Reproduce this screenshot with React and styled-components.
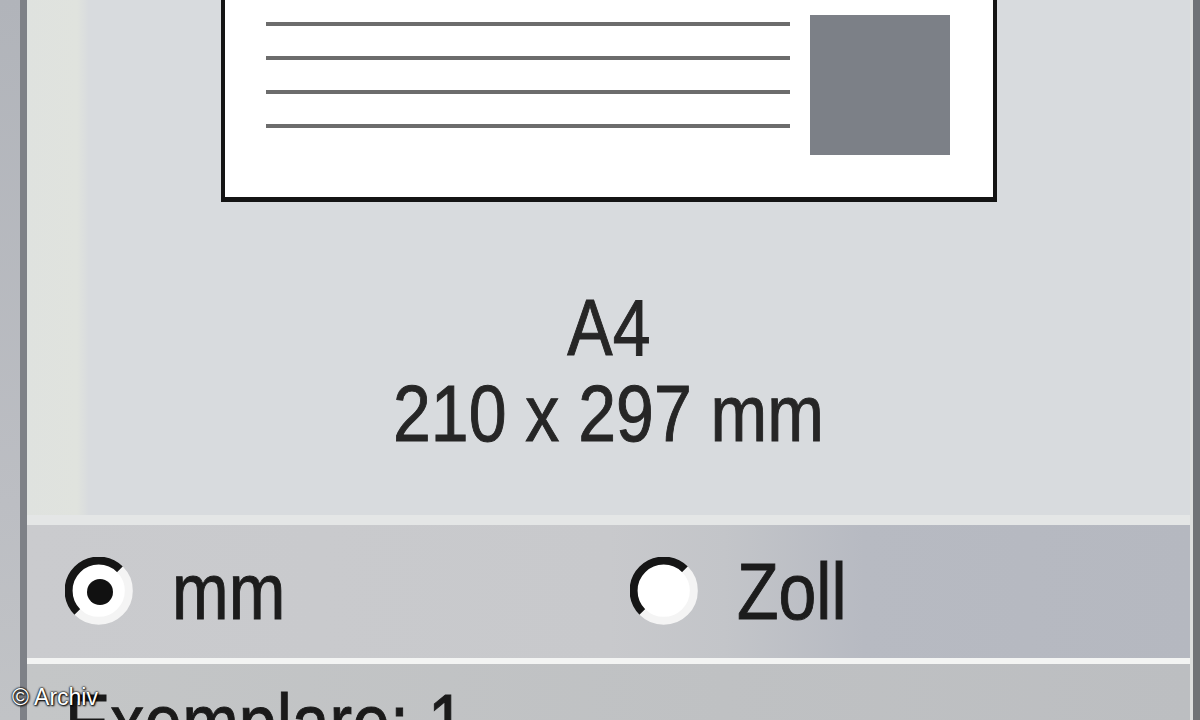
import React from "react"
import styled, { createGlobalStyle } from "styled-components"

const GlobalStyle = createGlobalStyle`
  html, body {
    margin: 0;
    padding: 0;
    width: 1200px;
    height: 720px;
    overflow: hidden;
    background: #d8dbde;
  }
  body {
    font-family: "Liberation Sans", Arial, sans-serif;
  }
`

const Frame = styled.div`
  position: relative;
  display: flex;
  width: 1200px;
  height: 720px;
  overflow: hidden;
`
const OuterStrip = styled.div`
  width: 20px;
  background: linear-gradient(180deg, #b1b4ba 0%, #bcbec3 70%, #c1c3c6 100%);
`
const Rule = styled.div`
  width: ${(p) => p.w}px;
  background: ${(p) => p.color};
`
const Main = styled.div`
  flex: 1;
  min-height: 0;
  display: flex;
  flex-direction: column;
  overflow: hidden;
`
const PreviewPanel = styled.div`
  flex-shrink: 0;
  height: 515px;
  display: flex;
  flex-direction: column;
  align-items: center;
  background: linear-gradient(
    90deg,
    #dfe2df 0,
    #e0e3de 50px,
    #d8dbde 62px,
    #d8dbde 100%
  );
`
const Paper = styled.div`
  display: flex;
  gap: 20px;
  box-sizing: border-box;
  width: 776px;
  height: 202px;
  padding: 0 42px 0 41px;
  background: #fff;
  border: 4px solid #141414;
  border-top: none;
  border-bottom-width: 5px;
`
const Lines = styled.div`
  width: 524px;
  display: flex;
  flex-direction: column;
  gap: 30px;
  padding-top: 22px;
`
const Line = styled.div`
  height: 4px;
  background: #6c6c6c;
`
const Thumb = styled.div`
  width: 140px;
  height: 140px;
  margin-top: 15px;
  background: #7c8087;
`
const Caption = styled.div`
  margin-top: 83px;
  display: flex;
  flex-direction: column;
  align-items: center;
  color: #262626;
`
const Big = styled.span`
  display: inline-block;
  font-size: 80px;
  line-height: 86px;
  transform: scaleX(0.85);
  white-space: pre;
  -webkit-text-stroke: 1px currentColor;
`
const Highlight = styled.div`
  flex-shrink: 0;
  height: 10px;
  background: #e4e6e6;
`
const RadioRow = styled.div`
  flex-shrink: 0;
  height: 133px;
  display: flex;
  align-items: center;
  padding-left: 38px;
  background: linear-gradient(
    90deg,
    #cacbce 0%,
    #c8c9cc 50%,
    #c3c5c9 60%,
    #b7bac2 72%,
    #b5b8c0 100%
  );
`
const Option = styled.label`
  display: flex;
  align-items: center;
  width: ${(p) => p.w || 565}px;
  gap: 37px;
  color: #1c1c1c;
`
const Label = styled.span`
  display: inline-block;
  font-size: 80px;
  line-height: 80px;
  transform: scaleX(0.85);
  transform-origin: left center;
  white-space: pre;
  -webkit-text-stroke: 1px currentColor;
`
const Separator = styled.div`
  flex-shrink: 0;
  height: 6px;
  background: #f3f4f3;
`
const CopiesPanel = styled.div`
  flex-shrink: 0;
  height: 120px;
  padding: 19px 0 0 38px;
  background: linear-gradient(90deg, #c4c6c7 0%, #bfc1c3 60%, #bcbec1 100%);
  color: #1a1a1a;
`
const Credit = styled.div`
  position: absolute;
  left: 12px;
  top: 684px;
  font-family: "Liberation Sans", Arial, sans-serif;
  font-size: 23px;
  line-height: 26px;
  color: #fff;
  text-shadow: 0 0 2px #000, 0 0 2px #000, 1px 1px 2px #000;
`

const Radio = ({ checked }) => (
  <svg width="70" height="70" viewBox="0 0 70 70">
    <circle cx="35" cy="35" r="29" fill="#fff" />
    <path
      d="M12.4 55 A29 29 0 0 1 55 12.4"
      fill="none"
      stroke="#151515"
      strokeWidth="8"
    />
    <path
      d="M55 12.4 A29 29 0 0 1 12.4 55"
      fill="none"
      stroke="#f4f4f4"
      strokeWidth="8"
    />
    {checked && <circle cx="35" cy="35" r="13" fill="#111" />}
  </svg>
)

const App = () => (
  <>
    <GlobalStyle />
    <Frame>
      <OuterStrip />
      <Rule w={7} color="#7e8187" />
      <Main>
        <PreviewPanel>
          <Paper>
            <Lines>
              <Line />
              <Line />
              <Line />
              <Line />
            </Lines>
            <Thumb />
          </Paper>
          <Caption>
            <Big>A4</Big>
            <Big>210 x 297 mm</Big>
          </Caption>
        </PreviewPanel>
        <Highlight />
        <RadioRow>
          <Option>
            <Radio checked />
            <Label>mm</Label>
          </Option>
          <Option w={300}>
            <Radio />
            <Label>Zoll</Label>
          </Option>
        </RadioRow>
        <Separator />
        <CopiesPanel>
          <Label>Exemplare: 1</Label>
        </CopiesPanel>
      </Main>
      <Rule w={3} color="#dcdedf" />
      <Rule w={7} color="#6f7277" />
      <Credit>© Archiv</Credit>
    </Frame>
  </>
)

export default App
